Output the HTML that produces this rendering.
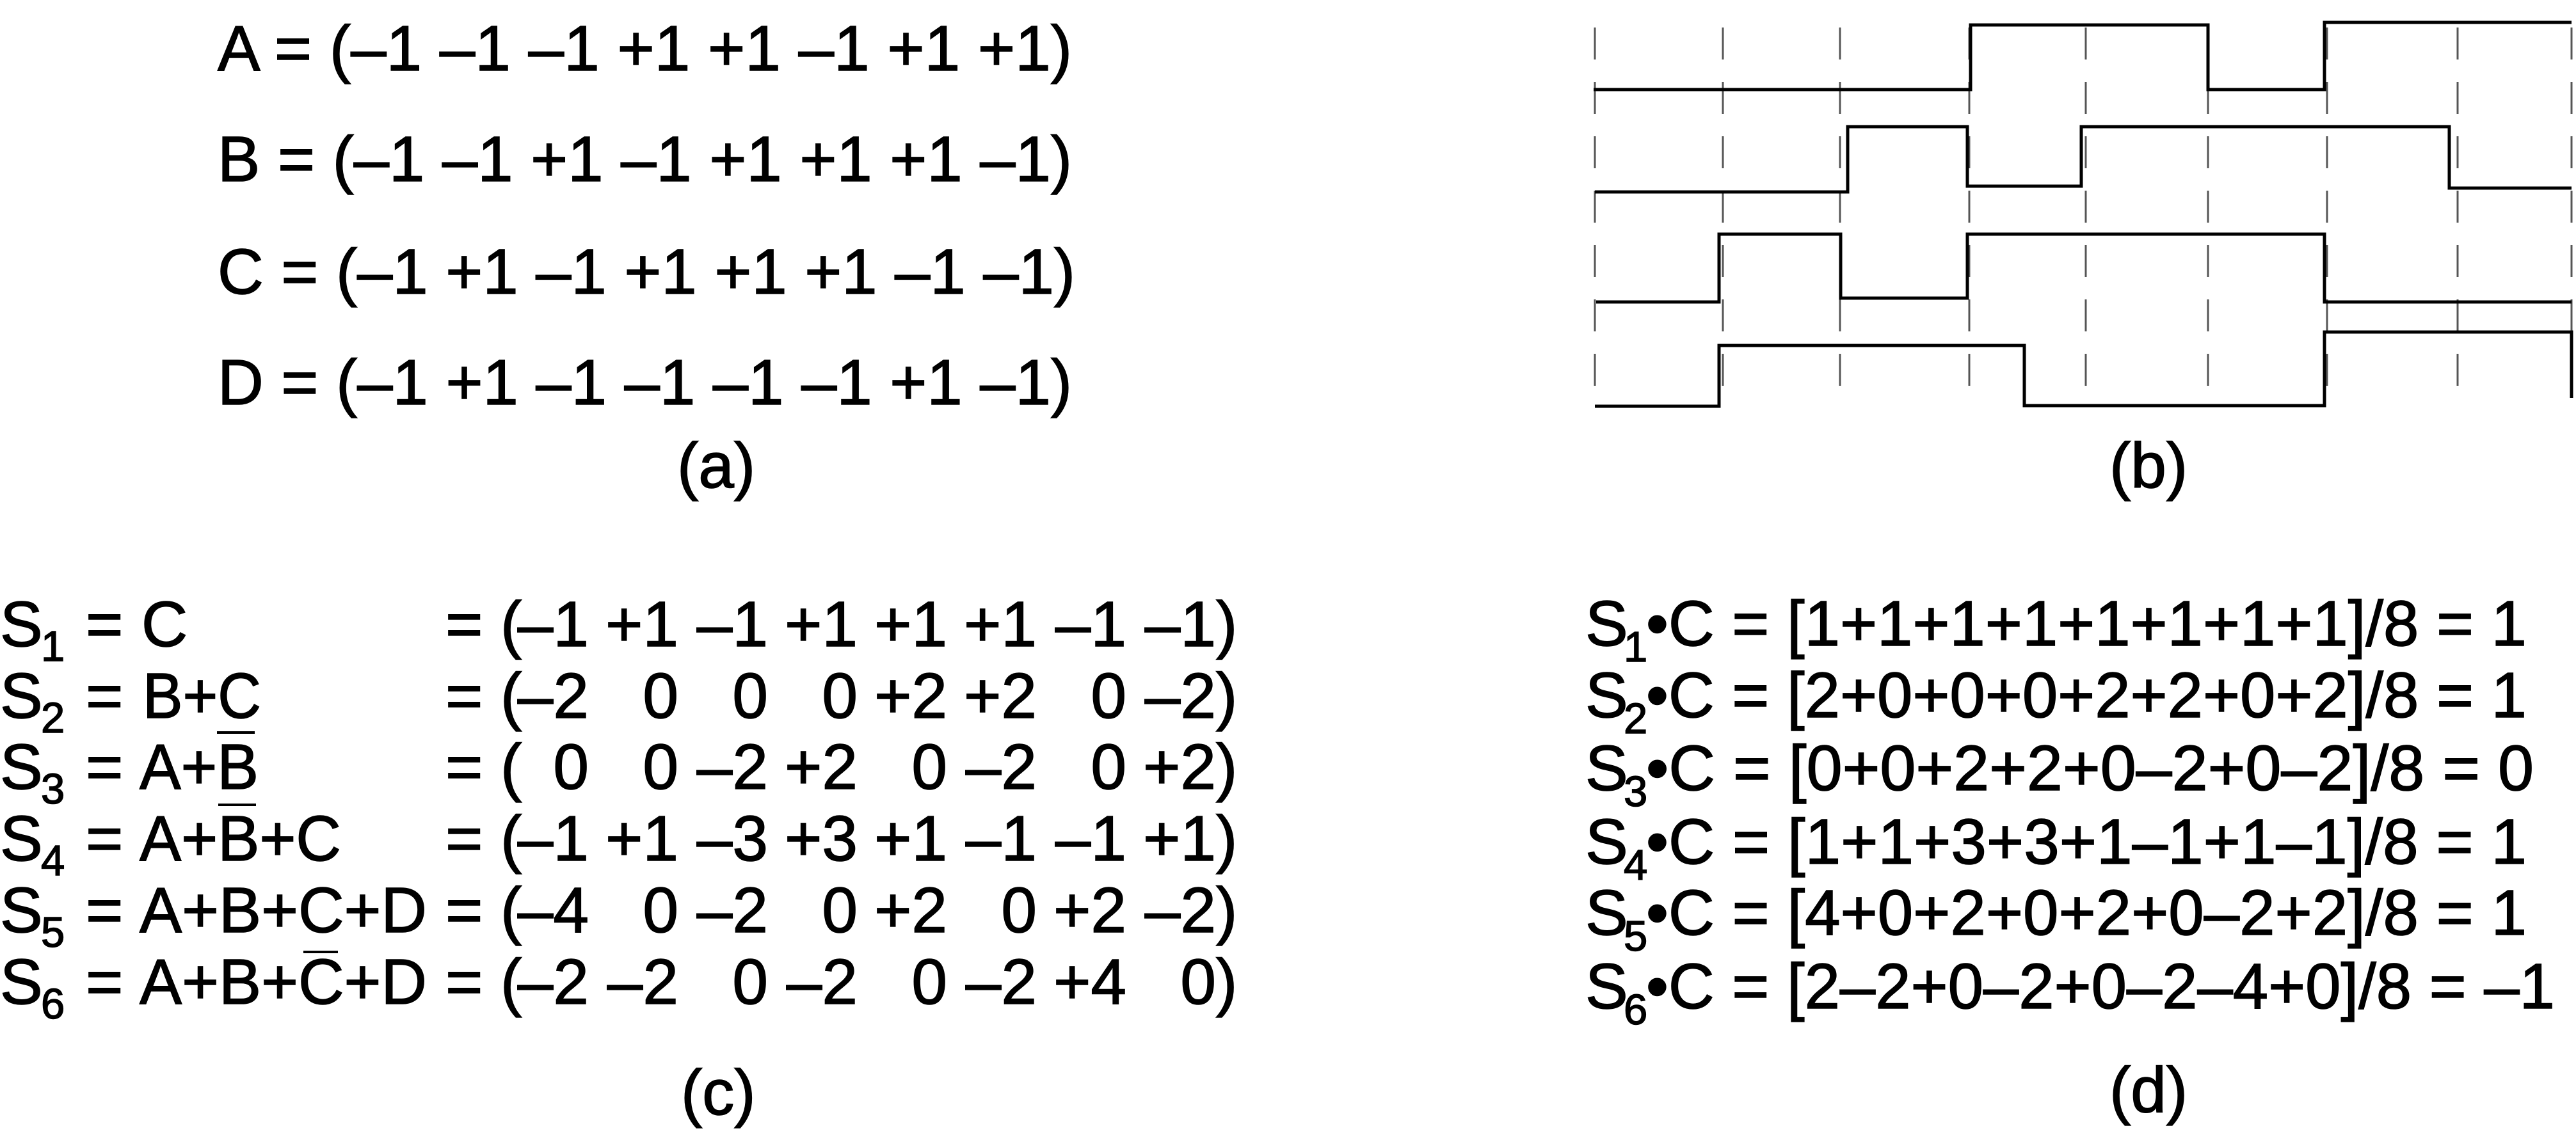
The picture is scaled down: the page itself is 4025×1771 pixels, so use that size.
<!DOCTYPE html>
<html><head><meta charset="utf-8"><style>
html,body{margin:0;padding:0;background:#fff;}
svg{display:block;}
text{font-family:"Liberation Sans",Arial,sans-serif;fill:#000;stroke:#000;stroke-width:1.5px;}
</style></head><body>
<svg width="4025" height="1771" viewBox="0 0 4025 1771" xmlns="http://www.w3.org/2000/svg">
<rect width="4025" height="1771" fill="#fff"/>
<!-- (a) -->
<g font-size="100">
<text x="340" y="110" textLength="1335" lengthAdjust="spacingAndGlyphs">A = (–1 –1 –1 +1 +1 –1 +1 +1)</text>
<text x="340" y="283" textLength="1335" lengthAdjust="spacingAndGlyphs">B = (–1 –1 +1 –1 +1 +1 +1 –1)</text>
<text x="340" y="459" textLength="1340" lengthAdjust="spacingAndGlyphs">C = (–1 +1 –1 +1 +1 +1 –1 –1)</text>
<text x="340" y="632" textLength="1335" lengthAdjust="spacingAndGlyphs">D = (–1 +1 –1 –1 –1 –1 +1 –1)</text>
<text x="1058" y="762">(a)</text>
<text x="3296" y="762">(b)</text>
<text x="1064" y="1742">(c)</text>
<text x="3296" y="1738">(d)</text>
</g>
<!-- (b) dashed grid -->
<g stroke="#555" stroke-width="3" stroke-dasharray="50 35" fill="none">
<line x1="2492" y1="43" x2="2492" y2="615"/>
<line x1="2692" y1="43" x2="2692" y2="615"/>
<line x1="2875" y1="43" x2="2875" y2="615"/>
<line x1="3077" y1="43" x2="3077" y2="615"/>
<line x1="3259" y1="43" x2="3259" y2="615"/>
<line x1="3450" y1="43" x2="3450" y2="615"/>
<line x1="3636" y1="43" x2="3636" y2="615"/>
<line x1="3840" y1="43" x2="3840" y2="615"/>
<line x1="4018" y1="43" x2="4018" y2="615"/>
</g>
<g stroke="#000" stroke-width="5" fill="none" stroke-linejoin="miter">
<polyline points="2490,140 3079,140 3079,39 3450,39 3450,140 3632,140 3632,35 4018,35"/>
<polyline points="2492,300 2887,300 2887,198 3074,198 3074,291 3252,291 3252,198 3827,198 3827,294 4018,294"/>
<polyline points="2494,472 2686,472 2686,366 2876,366 2876,466 3074,466 3074,366 3632,366 3632,472 4018,472"/>
<polyline points="2492,635 2686,635 2686,540 3163,540 3163,634 3632,634 3632,519 4018,519 4018,622"/>
</g>
<!-- (c) -->
<g font-size="100">
<text x="0" y="1010">S</text><text x="64" y="1033" font-size="67">1</text>
<text x="0" y="1122">S</text><text x="64" y="1145" font-size="67">2</text>
<text x="0" y="1233">S</text><text x="64" y="1256" font-size="67">3</text>
<text x="0" y="1345">S</text><text x="64" y="1368" font-size="67">4</text>
<text x="0" y="1457">S</text><text x="64" y="1480" font-size="67">5</text>
<text x="0" y="1569">S</text><text x="64" y="1592" font-size="67">6</text>
<g>
<text x="134" y="1010">=</text><text x="134" y="1122">=</text><text x="134" y="1233">=</text>
<text x="134" y="1345">=</text><text x="134" y="1457">=</text><text x="134" y="1569">=</text>
</g>
<text x="221" y="1010">C</text>
<text x="223" y="1122" textLength="185" lengthAdjust="spacingAndGlyphs">B+C</text>
<text x="218" y="1233" textLength="186" lengthAdjust="spacingAndGlyphs">A+B</text>
<text x="218" y="1345" textLength="315" lengthAdjust="spacingAndGlyphs">A+B+C</text>
<text x="218" y="1457" textLength="449" lengthAdjust="spacingAndGlyphs">A+B+C+D</text>
<text x="218" y="1569" textLength="449" lengthAdjust="spacingAndGlyphs">A+B+C+D</text>
<g>
<text x="696" y="1010">=</text><text x="696" y="1122">=</text><text x="696" y="1233">=</text>
<text x="696" y="1345">=</text><text x="696" y="1457">=</text><text x="696" y="1569">=</text>
<text x="782" y="1010">(</text><text x="782" y="1122">(</text><text x="782" y="1233">(</text>
<text x="782" y="1345">(</text><text x="782" y="1457">(</text><text x="782" y="1569">(</text>
<text x="1900" y="1010">)</text><text x="1900" y="1122">)</text><text x="1900" y="1233">)</text>
<text x="1900" y="1345">)</text><text x="1900" y="1457">)</text><text x="1900" y="1569">)</text>
</g>
<g text-anchor="end">
<text y="1010"><tspan x="920">–1</tspan><tspan x="1060">+1</tspan><tspan x="1200">–1</tspan><tspan x="1340">+1</tspan><tspan x="1480">+1</tspan><tspan x="1620">+1</tspan><tspan x="1760">–1</tspan><tspan x="1900">–1</tspan></text>
<text y="1122"><tspan x="920">–2</tspan><tspan x="1060">0</tspan><tspan x="1200">0</tspan><tspan x="1340">0</tspan><tspan x="1480">+2</tspan><tspan x="1620">+2</tspan><tspan x="1760">0</tspan><tspan x="1900">–2</tspan></text>
<text y="1233"><tspan x="920">0</tspan><tspan x="1060">0</tspan><tspan x="1200">–2</tspan><tspan x="1340">+2</tspan><tspan x="1480">0</tspan><tspan x="1620">–2</tspan><tspan x="1760">0</tspan><tspan x="1900">+2</tspan></text>
<text y="1345"><tspan x="920">–1</tspan><tspan x="1060">+1</tspan><tspan x="1200">–3</tspan><tspan x="1340">+3</tspan><tspan x="1480">+1</tspan><tspan x="1620">–1</tspan><tspan x="1760">–1</tspan><tspan x="1900">+1</tspan></text>
<text y="1457"><tspan x="920">–4</tspan><tspan x="1060">0</tspan><tspan x="1200">–2</tspan><tspan x="1340">0</tspan><tspan x="1480">+2</tspan><tspan x="1620">0</tspan><tspan x="1760">+2</tspan><tspan x="1900">–2</tspan></text>
<text y="1569"><tspan x="920">–2</tspan><tspan x="1060">–2</tspan><tspan x="1200">0</tspan><tspan x="1340">–2</tspan><tspan x="1480">0</tspan><tspan x="1620">–2</tspan><tspan x="1760">+4</tspan><tspan x="1900">0</tspan></text>
</g>
</g>
<g stroke="#000" stroke-width="4">
<line x1="339" y1="1145" x2="398" y2="1145"/>
<line x1="341" y1="1258" x2="400" y2="1258"/>
<line x1="474" y1="1488" x2="528" y2="1488"/>
</g>
<!-- (d) -->
<g font-size="100">
<text x="2477" y="1009">S</text><text x="2537" y="1034" font-size="67">1</text>
<text x="2477" y="1121">S</text><text x="2537" y="1146" font-size="67">2</text>
<text x="2477" y="1235">S</text><text x="2537" y="1260" font-size="67">3</text>
<text x="2477" y="1350">S</text><text x="2537" y="1375" font-size="67">4</text>
<text x="2477" y="1461">S</text><text x="2537" y="1486" font-size="67">5</text>
<text x="2477" y="1576">S</text><text x="2537" y="1601" font-size="67">6</text>
<text x="2572" y="1009" textLength="1376" lengthAdjust="spacingAndGlyphs">•C = [1+1+1+1+1+1+1+1]/8 = 1</text>
<text x="2572" y="1121" textLength="1376" lengthAdjust="spacingAndGlyphs">•C = [2+0+0+0+2+2+0+2]/8 = 1</text>
<text x="2572" y="1235" textLength="1387" lengthAdjust="spacingAndGlyphs">•C = [0+0+2+2+0–2+0–2]/8 = 0</text>
<text x="2572" y="1350" textLength="1376" lengthAdjust="spacingAndGlyphs">•C = [1+1+3+3+1–1+1–1]/8 = 1</text>
<text x="2572" y="1461" textLength="1376" lengthAdjust="spacingAndGlyphs">•C = [4+0+2+0+2+0–2+2]/8 = 1</text>
<text x="2572" y="1576" textLength="1420" lengthAdjust="spacingAndGlyphs">•C = [2–2+0–2+0–2–4+0]/8 = –1</text>
</g>
</svg>
</body></html>
